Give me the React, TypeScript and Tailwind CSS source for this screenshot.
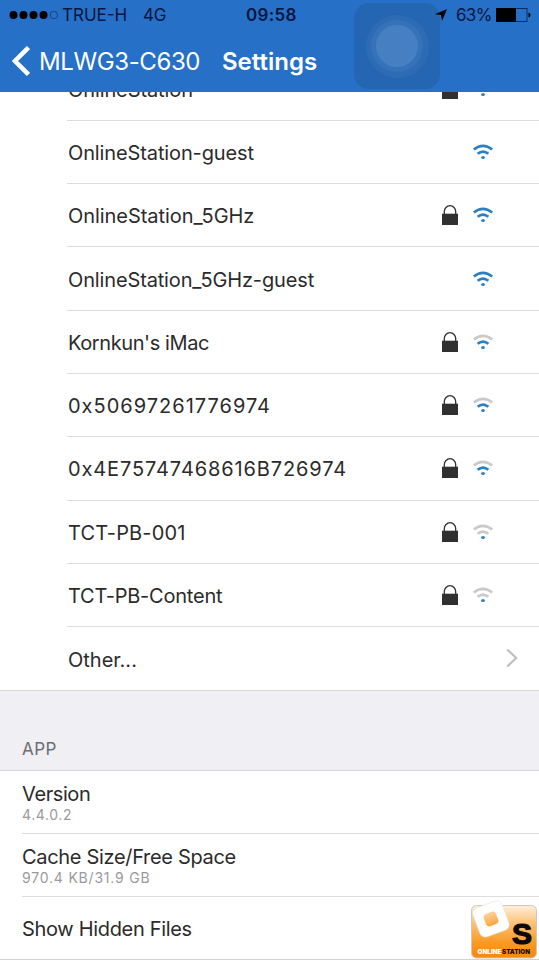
import React from 'react';

interface Network {
  name: string;
  locked: boolean;
  strength: number;
  tracking: string;
}

const networks: Network[] = [
  { name: 'OnlineStation', locked: true, strength: 3, tracking: 'tracking-[-0.1px]' },
  { name: 'OnlineStation-guest', locked: false, strength: 3, tracking: 'tracking-[-0.12px]' },
  { name: 'OnlineStation_5GHz', locked: true, strength: 3, tracking: 'tracking-[-0.06px]' },
  { name: 'OnlineStation_5GHz-guest', locked: false, strength: 3, tracking: 'tracking-[-0.14px]' },
  { name: "Kornkun's iMac", locked: true, strength: 2, tracking: 'tracking-[-0.4px]' },
  { name: '0x50697261776974', locked: true, strength: 2, tracking: 'tracking-[1px]' },
  { name: '0x4E75747468616B726974', locked: true, strength: 2, tracking: 'tracking-[0.88px]' },
  { name: 'TCT-PB-001', locked: true, strength: 1, tracking: 'tracking-[0.15px]' },
  { name: 'TCT-PB-Content', locked: true, strength: 1, tracking: 'tracking-[-0.22px]' },
];

function LockIcon() {
  return (
    <svg width="16" height="20" viewBox="0 0 16 20" className="shrink-0">
      <path d="M2.3 9.5V6.6a5.7 5.9 0 0 1 11.4 0v2.9" fill="none" stroke="#303030" strokeWidth="1.3" />
      <path d="M0 8.7h16V20H0z" fill="#303030" />
    </svg>
  );
}

function WifiIcon({ strength }: { strength: number }) {
  const on = '#2a80c0';
  const off = '#c9c9c9';
  return (
    <svg width="20" height="16" viewBox="0 0 20 16" className="shrink-0">
      <path d="M.8 5.5Q10-1.9 19.2 5.5" fill="none" stroke={strength > 2 ? on : off} strokeWidth="2.6" />
      <path d="M4.6 9.8Q10 5.3 15.4 9.8" fill="none" stroke={strength > 1 ? on : off} strokeWidth="2.7" />
      <ellipse cx="10" cy="13.5" rx="1.9" ry="1.5" fill={on} />
    </svg>
  );
}

function StatusBar() {
  return (
    <div className="flex h-[30px] items-center pl-[9px] text-[17px] text-[#07163f]">
      <svg width="50" height="10" viewBox="0 0 50 10" className="shrink-0">
        <circle cx="4.5" cy="5" r="4" fill="#000" />
        <circle cx="14.5" cy="5" r="4" fill="#000" />
        <circle cx="24.5" cy="5" r="4" fill="#000" />
        <circle cx="34.5" cy="5" r="4" fill="#000" />
        <circle cx="44.8" cy="5" r="3.7" fill="none" stroke="#123a78" strokeWidth=".8" />
      </svg>
      <span className="ml-[3px] w-[81px] whitespace-nowrap pt-[2px]">TRUE-H</span>
      <span className="w-[103px] pt-[2px] tracking-[-0.3px]">4G</span>
      <span className="w-[189px] pt-[2px] font-semibold tracking-[0.3px]">09:58</span>
      <svg width="12" height="12" viewBox="0 0 12 12" className="shrink-0">
        <path d="M12 0 7 12 6 6 0 5.2z" fill="#000" />
      </svg>
      <span className="ml-[9px] w-[40px] pt-[2px] tracking-[-0.7px]">63%</span>
      <svg width="35" height="14" viewBox="0 0 35 14" className="shrink-0">
        <rect x=".5" y=".5" width="30.5" height="13" fill="none" stroke="#0b1c44" strokeWidth=".8" />
        <path d="M0 0h20v14H0zM32.500 4.500q2 .5 2 2.500t-2 2.500z" fill="#000" />
      </svg>
    </div>
  );
}

function AssistiveTouch() {
  return (
    <div className="absolute left-[354px] top-[3px] flex size-[86px] items-center justify-center rounded-[15px] bg-[#2566b2]">
      <div className="flex size-[63px] items-center justify-center rounded-full bg-[#2d6bb5]">
        <div className="flex size-[52px] items-center justify-center rounded-full bg-[#3572b9]">
          <div className="size-[42px] rounded-full bg-[#4680c2]" />
        </div>
      </div>
    </div>
  );
}

function StationLogo() {
  return (
    <svg width="68" height="58" viewBox="0 0 68 58" className="absolute left-[470px] top-[902px] overflow-visible">
      <defs>
        <linearGradient id="logoBg" x1="0" y1="0" x2="0" y2="1">
          <stop offset="0" stopColor="#fff0dc" />
          <stop offset=".35" stopColor="#fcc073" />
          <stop offset=".7" stopColor="#f99a24" />
          <stop offset="1" stopColor="#f58a0c" />
        </linearGradient>
        <linearGradient id="logoHole" x1="0" y1="0" x2="0" y2="1">
          <stop offset="0" stopColor="#fcd09a" />
          <stop offset="1" stopColor="#fba63c" />
        </linearGradient>
      </defs>
      <rect x="1.5" y="3.5" width="65" height="52.5" rx="5" fill="url(#logoBg)" stroke="#cfc8c0" strokeWidth="1" />
      <g transform="rotate(-20 21 17)">
        <rect x="5.5" y="1.5" width="31" height="31" rx="6" fill="#fff" stroke="#eadfd2" strokeWidth=".5" />
        <rect x="14.500" y="10.500" width="13" height="13" rx="3.500" fill="url(#logoHole)" />
      </g>
      <text x="42" y="42" fontSize="29" fontWeight="700" fontFamily="Liberation Sans, sans-serif" fill="#0a0a0a" stroke="#0a0a0a" strokeWidth="1.2" textLength="20" lengthAdjust="spacingAndGlyphs">S</text>
      <text x="7.5" y="51.7" fontSize="6.5" fontWeight="900" fill="#fff" textLength="24" lengthAdjust="spacingAndGlyphs">ONLINE</text>
      <text x="32" y="51.7" fontSize="6.5" fontWeight="900" fill="#1a0c00" textLength="28" lengthAdjust="spacingAndGlyphs">STATION</text>
    </svg>
  );
}

export default function App() {
  return (
    <div className="relative h-[960px] w-[539px] overflow-hidden bg-white font-['Inter',sans-serif] text-[20px] text-[#2b2b2b]">
      <header className="relative z-10 h-[92px] bg-[#2670c7]">
        <AssistiveTouch />
        <div className="relative">
          <StatusBar />
          <div className="flex h-[62px] items-center pl-[12px] text-white">
            <svg width="18" height="30" viewBox="0 0 18 30" className="shrink-0">
              <path d="M16.5 1.5 3 15l13.5 13.5" fill="none" stroke="#fff" strokeWidth="4.5" />
            </svg>
            <span className="ml-[9px] w-[183px] whitespace-nowrap pt-px text-[24px] tracking-[-0.4px]">MLWG3-C630</span>
            <span className="pt-px text-[24px] font-semibold">Settings</span>
          </div>
        </div>
      </header>

      <ul className="-mt-[34.5px]">
        {networks.map((network) => (
          <li key={network.name} className="h-[63.3px] pl-[67px]">
            <div className="flex h-full items-center border-b border-[#dddddf] pl-px pr-[46px]">
              <span className={`flex-1 whitespace-nowrap pt-[2px] ${network.tracking}`}>{network.name}</span>
              {network.locked && <LockIcon />}
              <span className="ml-[15px]">
                <WifiIcon strength={network.strength} />
              </span>
            </div>
          </li>
        ))}
        <li className="flex h-[63.3px] items-center justify-between pl-[68px] pr-[21px]">
          <span className="pt-[2px]">Other...</span>
          <svg width="12" height="20" viewBox="0 0 12 20" className="mb-px">
            <path d="M1.2 1.5 10.2 10l-9 8.5" fill="none" stroke="#c0c0c2" strokeWidth="2.2" />
          </svg>
        </li>
      </ul>

      <h2 className="flex h-[80.5px] items-end border-y border-[#d8d8dc] bg-[#efeff4] pb-[10px] pl-[22px] text-[17px] leading-[22px] tracking-[0.5px] text-[#6d6d72]">
        APP
      </h2>

      <div className="pl-[22px]">
        <div className="flex h-[63px] flex-col justify-center border-b border-[#dddddf] pt-[2px]">
          <span className="leading-[24px] tracking-[-0.4px]">Version</span>
          <span className="text-[14px] leading-[18px] tracking-[0.6px] text-[#9a9a9c]">4.4.0.2</span>
        </div>
        <div className="flex h-[63px] flex-col justify-center border-b border-[#dddddf] pt-[2px]">
          <span className="leading-[24px] tracking-[-0.32px]">Cache Size/Free Space</span>
          <span className="text-[14px] leading-[18px] tracking-[0.8px] text-[#9a9a9c]">970.4 KB/31.9 GB</span>
        </div>
        <div className="flex h-[63px] items-center pt-[2px]">
          <span className="tracking-[-0.32px]">Show Hidden Files</span>
        </div>
      </div>
      <div className="absolute inset-x-0 bottom-0 h-px bg-[#d3d3d6]" />
      <StationLogo />
    </div>
  );
}
